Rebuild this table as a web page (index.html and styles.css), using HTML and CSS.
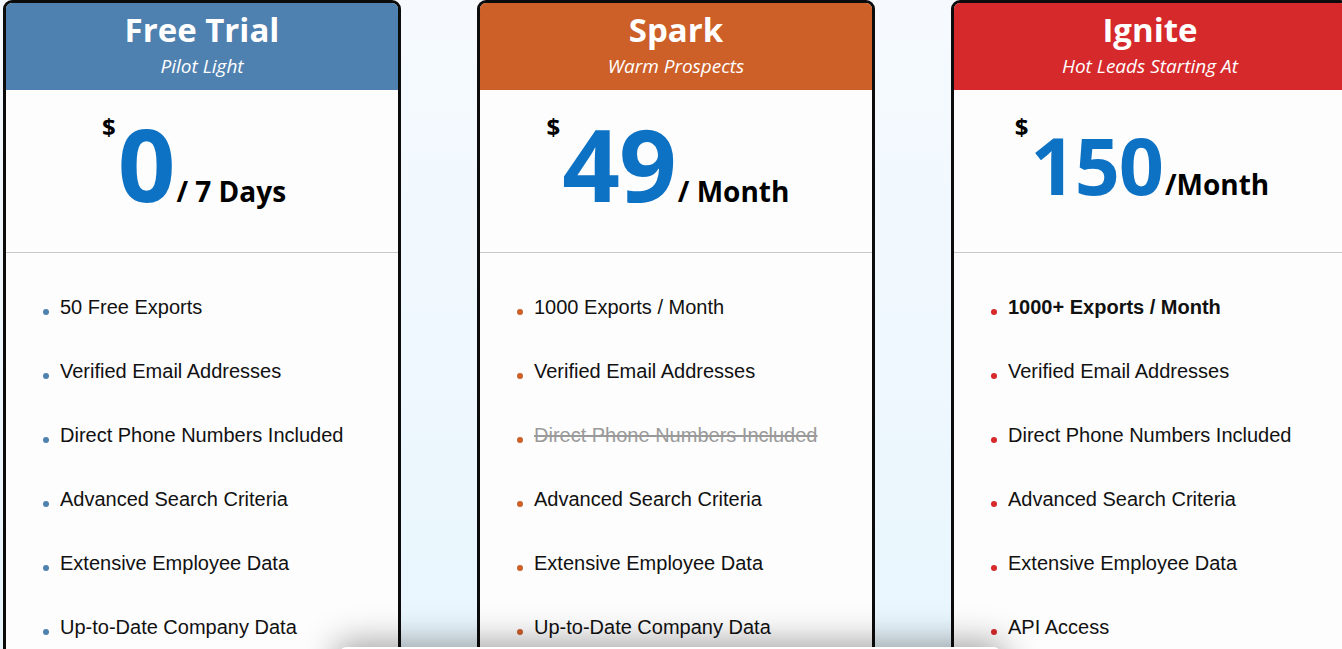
FILE: index.html
```html
<!DOCTYPE html>
<html lang="en">
<head>
<meta charset="utf-8">
<title>Pricing</title>
<link rel="stylesheet" href="styles.css">
</head>
<body>
<div class="plans">
  <section class="card card--blue">
    <header class="card__head">
      <h2 class="card__title">Free Trial</h2>
      <p class="card__sub">Pilot Light</p>
    </header>
    <div class="price">
      <span class="price__cur">$</span><span class="price__amt">0</span><span class="price__per">/ 7 Days</span>
    </div>
    <ul class="features">
      <li>50 Free Exports</li>
      <li>Verified Email Addresses</li>
      <li>Direct Phone Numbers Included</li>
      <li>Advanced Search Criteria</li>
      <li>Extensive Employee Data</li>
      <li>Up-to-Date Company Data</li>
    </ul>
  </section>

  <section class="card card--orange">
    <header class="card__head">
      <h2 class="card__title">Spark</h2>
      <p class="card__sub">Warm Prospects</p>
    </header>
    <div class="price">
      <span class="price__cur">$</span><span class="price__amt">49</span><span class="price__per">/ Month</span>
    </div>
    <ul class="features">
      <li>1000 Exports / Month</li>
      <li>Verified Email Addresses</li>
      <li class="is-off"><s>Direct Phone Numbers Included</s></li>
      <li>Advanced Search Criteria</li>
      <li>Extensive Employee Data</li>
      <li>Up-to-Date Company Data</li>
    </ul>
  </section>

  <section class="card card--red">
    <header class="card__head">
      <h2 class="card__title">Ignite</h2>
      <p class="card__sub">Hot Leads Starting At</p>
    </header>
    <div class="price price--small">
      <span class="price__cur">$</span><span class="price__amt">150</span><span class="price__per">/Month</span>
    </div>
    <ul class="features">
      <li class="is-strong">1000+ Exports / Month</li>
      <li>Verified Email Addresses</li>
      <li>Direct Phone Numbers Included</li>
      <li>Advanced Search Criteria</li>
      <li>Extensive Employee Data</li>
      <li>API Access</li>
    </ul>
  </section>
</div>
<div class="popup"></div>
</body>
</html>
```

FILE: styles.css
```css
* { box-sizing: border-box; }

html, body {
  margin: 0;
  padding: 0;
  height: 100%;
  overflow: hidden;
}

body {
  background: linear-gradient(180deg, #f6fafe 0%, #e8f6fd 100%);
  font-family: "Open Sans", "Liberation Sans", sans-serif;
  color: #000;
}

.plans {
  display: flex;
  gap: 76px;
  padding-left: 3px;
}

.card {
  flex: 0 0 398px;
  width: 398px;
  height: 720px;
  border: 3px solid #0c0c0c;
  border-radius: 9px;
  background: #fdfdfd;
  overflow: hidden;
}

.card__head {
  height: 87px;
  text-align: center;
  color: #fff;
  padding-top: 5px;
}

.card--blue .card__head { background: #4f81b0; }
.card--orange .card__head { background: #cd5f29; }
.card--red .card__head { background: #d6292b; }

.card--blue { --dot: #4f81b0; }
.card--orange { --dot: #cd5f29; }
.card--red { --dot: #d6292b; }

.card__title {
  margin: 0;
  font-size: 33px;
  font-weight: 700;
  line-height: 44px;
}

.card__sub {
  margin: 0;
  margin-top: 1px;
  font-style: italic;
  font-size: 19px;
  line-height: 26px;
}

.price {
  height: 163px;
  border-bottom: 1px solid #c8c8c8;
  display: flex;
  justify-content: center;
  align-items: baseline;
  padding-right: 16px;
  padding-top: 16px;
}

.price__cur {
  align-self: flex-start;
  font-size: 24px;
  font-weight: 700;
  line-height: 24px;
  margin-top: 9px;
  margin-right: 2px;
}

.price__amt {
  font-size: 101px;
  font-weight: 700;
  line-height: 114px;
  color: #0d72c4;
  letter-spacing: -1px;
}

.price__per {
  font-size: 28px;
  font-weight: 700;
  margin-left: 2px;
}

.price--small .price__amt {
  font-size: 79px;
  line-height: 118px;
}

.features {
  list-style: none;
  margin: 0;
  padding: 22px 0 0 54px;
  font-family: "Liberation Sans", Arial, sans-serif;
  font-size: 20px;
}

.features li {
  position: relative;
  line-height: 64px;
  color: #111;
}

.features li::before {
  content: "";
  position: absolute;
  left: -17px;
  top: 34px;
  width: 6px;
  height: 6px;
  border-radius: 50%;
  background: var(--dot);
}

.features li.is-off s {
  color: #9a9a9a;
  text-decoration-thickness: 2px;
}

.features li.is-strong {
  font-weight: 700;
}

.popup {
  position: absolute;
  left: 340px;
  top: 647px;
  width: 660px;
  height: 60px;
  background: #fff;
  border-radius: 6px;
  box-shadow: 0 0 34px 4px rgba(0, 0, 0, 0.38);
}
```
